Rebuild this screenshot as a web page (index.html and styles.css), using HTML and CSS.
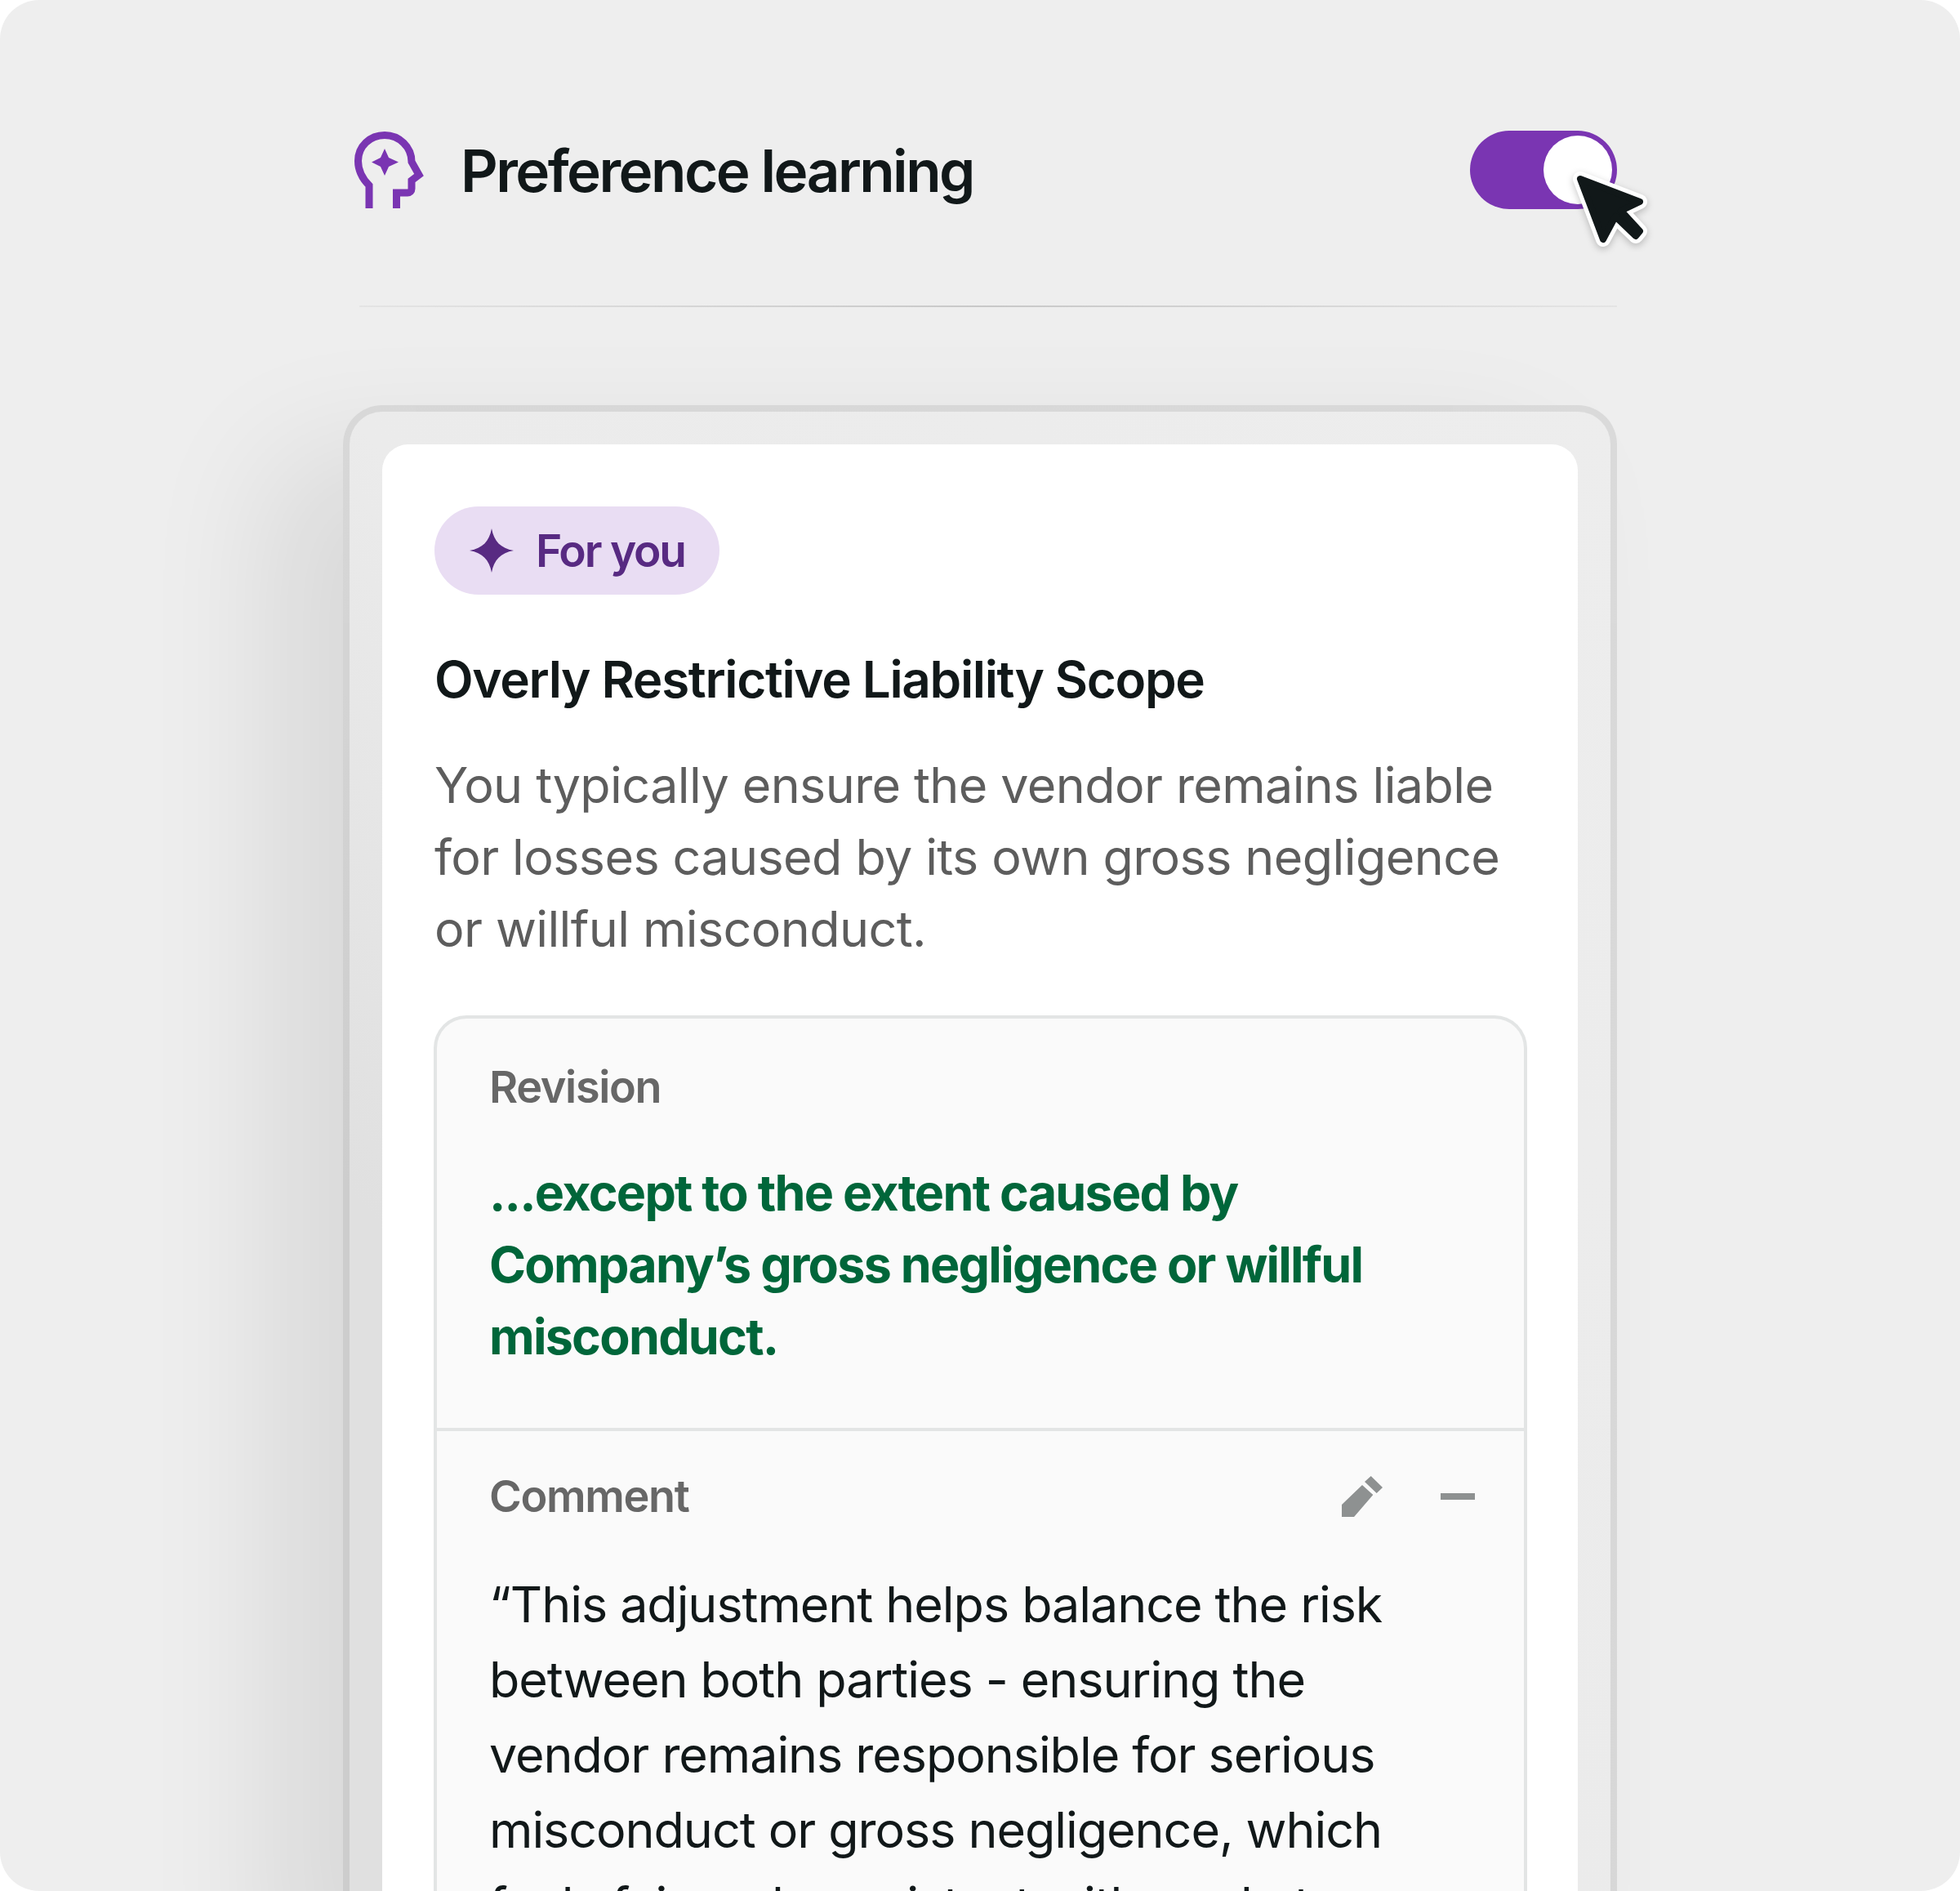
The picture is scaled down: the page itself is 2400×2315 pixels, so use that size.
FILE: index.html
```html
<!DOCTYPE html>
<html lang="en">
<head>
<meta charset="utf-8">
<title>Preference learning</title>
<link rel="stylesheet" href="styles.css">
</head>
<body>
<main class="stage">
  <header class="head">
    <div class="head-left">
      <svg class="head-icon" viewBox="0 0 85 94" width="85" height="94"><path d="M18 94V66C9 57 4.500 48 4.500 36C4.500 18 19 4.500 37 4.500C55 4.500 70 19 70 37L79 53L70 60V70C70 73 68 75 65 75H51.500V94" fill="none" stroke="#7a35b2" stroke-width="9"/><path d="M37 21L42 32L54 37.500L42 43L37 54L32 43L21 37.500L32 32Z" fill="#7a35b2"/></svg>
      <h1 class="head-title">Preference learning</h1>
    </div>
    <div class="toggle">
      <span class="knob"></span>
      <svg class="cursor" viewBox="0 0 100 100" width="100" height="100"><path class="cursor-edge" d="M15 14L88 42L65 53L88 78L83 84L58 60L43 88Z"/><path class="cursor-fill" d="M15 14L88 42L65 53L88 78L83 84L58 60L43 88Z"/></svg>
    </div>
  </header>
  <div class="rule"></div>
  <section class="frame">
    <article class="card">
      <div class="pill">
        <svg viewBox="0 0 54 54" width="54" height="54"><path d="M27 0C30 16 38 24 54 27C38 30 30 38 27 54C24 38 16 30 0 27C16 24 24 16 27 0Z" fill="#582a82"/></svg>
        <span>For you</span>
      </div>
      <h2 class="title">Overly Restrictive Liability Scope</h2>
      <p class="desc">You typically ensure the vendor remains liable for losses caused by its own gross negligence or willful misconduct.</p>
      <div class="box">
        <div class="revision">
          <div class="label">Revision</div>
          <p class="green">...except to the extent caused by Company’s gross negligence or willful misconduct.</p>
        </div>
        <div class="comment">
          <div class="comment-head">
            <div class="label">Comment</div>
            <div class="tools">
              <svg viewBox="0 0 50 50" width="50" height="50"><path d="M0 50V35L25 11L38.300 23L15 50Z M28 7L35.700 0L50 14L42.700 21Z" fill="#8e9191"/></svg>
              <span class="minus"></span>
            </div>
          </div>
          <p class="quote">“This adjustment helps balance the risk between both parties - ensuring the vendor remains responsible for serious misconduct or gross negligence, which feels fair and consistent with market</p>
        </div>
      </div>
    </article>
  </section>
</main>
</body>
</html>
```
FILE: styles.css
```css
* { box-sizing: border-box; }
html, body { margin: 0; padding: 0; background: #fff; }
body { width: 2400px; height: 2315px; overflow: hidden; font-family: Inter, "Liberation Sans", sans-serif; }
.stage { width: 2400px; height: 2315px; background: #eeeeee; border-radius: 48px; overflow: hidden; padding: 160px 420px 0 420px; }
.head { height: 96px; display: flex; justify-content: space-between; align-items: center; padding-left: 14px; }
.head-left { display: flex; align-items: center; }
.head-icon { display: block; }
.head-title { margin: 1px 0 0 45px; font-size: 71px; font-weight: 600; letter-spacing: -2.550px; color: #111819; line-height: 94px; }
.toggle { position: relative; width: 180px; height: 96px; border-radius: 48px; background: #7a35b2; }
.knob { position: absolute; right: 6px; top: 6px; width: 84px; height: 84px; border-radius: 50%; background: #fff; }
.cursor { position: absolute; left: 120px; top: 45px; filter: drop-shadow(0 3px 4px rgba(0,0,0,.22)); }
.cursor-edge { fill: #fff; stroke: #fff; stroke-width: 18; stroke-linejoin: round; }
.cursor-fill { fill: #111819; stroke: #111819; stroke-width: 8; stroke-linejoin: round; }
.rule { height: 2px; margin: 118px 0 0 20px; background: linear-gradient(90deg, #e4e4e4, #c8c8c8 50%, #e4e4e4); }
.frame { margin-top: 120px; height: 1900px; border: 8px solid rgba(0,0,0,.08); border-bottom: 0; border-radius: 48px 48px 0 0; padding: 40px 40px 0; background: linear-gradient(to bottom left, #ededed 0%, #ebebeb 50%, #e0e0e0 75%) border-box; box-shadow: -90px 60px 160px rgba(0,0,0,.09); }
.card { background: #fff; border-radius: 32px 32px 0 0; height: 1900px; padding: 76px 62px 0 64px; }
.pill { display: inline-flex; align-items: center; height: 108px; padding: 0 42px 0 43px; gap: 27px; border-radius: 54px; background: #e9ddf3; color: #582a82; font-size: 55px; font-weight: 600; letter-spacing: -2.200px; }
.title { margin: 60px 0 0; font-size: 62px; font-weight: 600; letter-spacing: -1.350px; line-height: 88px; color: #111819; }
.desc { margin: 41px 0 0; font-size: 61px; line-height: 88px; color: #5d5d5d; letter-spacing: -.6px; }
.box { margin: 62px 0 0 -1px; min-height: 1200px; border: 4px solid #e3e5e5; border-bottom: 0; border-radius: 40px 40px 0 0; background: #fafafa; }
.revision { padding: 52px 64px 68px; border-bottom: 4px solid #e3e5e5; }
.label { font-size: 54px; line-height: 64px; font-weight: 600; color: #676767; letter-spacing: -1.350px; }
.green { margin: 53px 0 0; font-size: 61px; font-weight: 700; line-height: 88px; color: #00663a; letter-spacing: -1.750px; }
.comment { padding: 48px 60px 0 64px; }
.comment-head { display: flex; justify-content: space-between; align-items: center; }
.tools { display: flex; align-items: center; gap: 71px; }
.minus { width: 42px; height: 8px; background: #8e9191; }
.quote { margin: 54px 0 0; max-width: 1150px; font-size: 61px; line-height: 92px; color: #111819; letter-spacing: -1.050px; }
```
